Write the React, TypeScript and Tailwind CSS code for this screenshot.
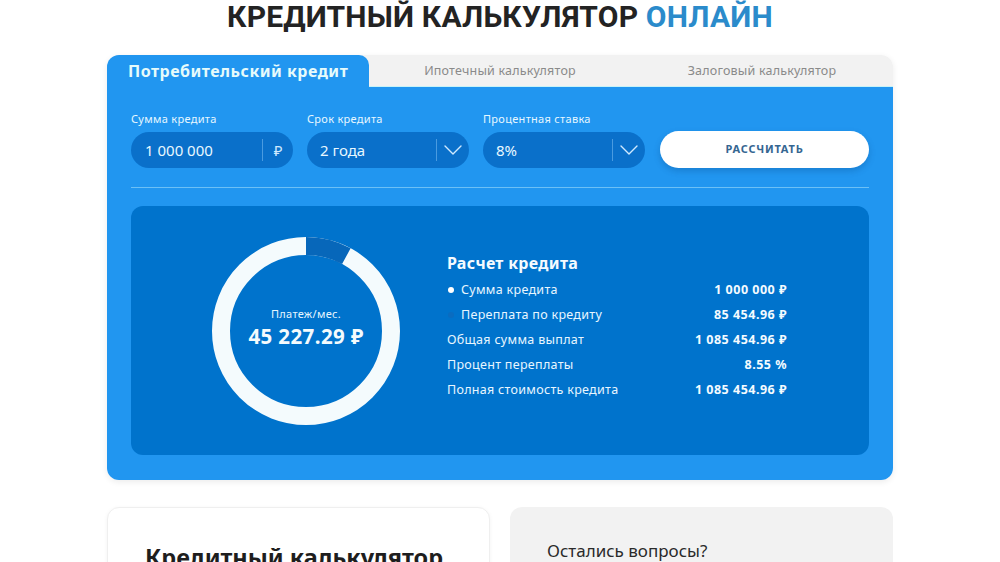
import React from "react";

const body = { fontFamily: '"Noto Sans", "Open Sans", sans-serif' };

function Chevron() {
  return (
    <svg width="18" height="10" viewBox="0 0 18 10" fill="none">
      <path d="M1 1l8 8 8-8" stroke="#cfe9ff" strokeWidth="1.4" strokeLinecap="round" strokeLinejoin="round" />
    </svg>
  );
}

function Donut() {
  const r = 85;
  const c = 2 * Math.PI * r;
  const frac = 0.0787;
  return (
    <div className="relative w-[188px] h-[188px] shrink-0">
      <svg width="188" height="188" viewBox="0 0 188 188" className="-rotate-90">
        <circle cx="94" cy="94" r={r} fill="none" stroke="#f4fbfd" strokeWidth="18" />
        <circle
          cx="94"
          cy="94"
          r={r}
          fill="none"
          stroke="#0767ba"
          strokeWidth="18"
          strokeDasharray={`${c * frac} ${c}`}
        />
      </svg>
      <div className="absolute inset-0 flex flex-col items-center justify-center pb-[2px]">
        <div className="text-[11px] leading-[13px] tracking-[0.3px] text-[#e6f6ff] mt-[-4px]">Платеж/мес.</div>
        <div className="text-[20.5px] leading-[24px] font-bold tracking-[0.4px] text-[#f4fbfd] mt-[4px]">45 227.29 ₽</div>
      </div>
    </div>
  );
}

function Row({ label, value, dot }: { label: string; value: string; dot?: "white" | "blue" }) {
  return (
    <div className="flex items-center justify-between h-[25px]">
      <div className="flex items-center text-[12.5px] tracking-[0.3px] text-[#e8f6ff]">
        {dot && (
          <span
            className={
              dot === "white"
                ? "w-[6px] h-[6px] rounded-full bg-white ml-[1px] mr-[7px]"
                : "w-[6px] h-[6px] rounded-full bg-[#0a6cc0] ml-[1px] mr-[7px]"
            }
          />
        )}
        <span>{label}</span>
      </div>
      <div className="text-[12.5px] font-bold tracking-[0.5px] text-[#f4fbff]">{value}</div>
    </div>
  );
}

export default function App() {
  return (
    <div className="w-full h-[562px] overflow-hidden bg-white" style={body}>
      <h1
        className="text-center text-[30px] leading-[30px] font-bold mt-[2px] tracking-[0.2px]"
        style={{ fontFamily: 'Roboto, "Liberation Sans", sans-serif' }}
      >
        <span className="text-[#232323]">КРЕДИТНЫЙ КАЛЬКУЛЯТОР </span>
        <span className="text-[#2b8bcb]">ОНЛАЙН</span>
      </h1>

      <div className="w-[786px] mx-auto mt-[23px] rounded-[12px] overflow-hidden shadow-[0_2px_6px_rgba(0,0,0,0.08)]">
        <div className="grid grid-cols-3 h-[32px] bg-[#f2f2f2] shadow-[inset_0_-1px_0_#c9f3f7]">
          <div className="bg-[#2196f0] rounded-tr-[10px] flex items-center pl-[21px]">
            <span className="text-[16px] font-bold tracking-[0.5px] text-[#e6fbfb]">Потребительский кредит</span>
          </div>
          <div className="flex items-center justify-center text-[12.5px] tracking-[0.2px] text-[#8a8a8a]">Ипотечный калькулятор</div>
          <div className="flex items-center justify-center text-[12.5px] tracking-[0.2px] text-[#8a8a8a]">Залоговый калькулятор</div>
        </div>

        <div className="bg-[#2196f0] px-[24px] pt-[25px] pb-[25px]">
          <div className="flex items-end gap-[14px]">
            <div className="w-[162px]">
              <div className="text-[11px] leading-[14px] tracking-[0.3px] text-[#e6f6ff] mb-[6px]">Сумма кредита</div>
              <div className="h-[36px] rounded-full bg-[#0a70ca] flex items-center">
                <span className="flex-1 pl-[14px] text-[15px] text-[#e8f8ff]">1 000 000</span>
                <span className="w-px h-[22px] bg-[#4a9be0]" />
                <span className="w-[30px] text-center text-[15px] text-[#cfe9ff]">₽</span>
              </div>
            </div>
            <div className="w-[162px]">
              <div className="text-[11px] leading-[14px] tracking-[0.3px] text-[#e6f6ff] mb-[6px]">Срок кредита</div>
              <div className="h-[36px] rounded-full bg-[#0a70ca] flex items-center">
                <span className="flex-1 pl-[13px] text-[15px] text-[#e8f8ff]">2 года</span>
                <span className="w-px h-[22px] bg-[#4a9be0]" />
                <span className="w-[32px] flex justify-center">
                  <Chevron />
                </span>
              </div>
            </div>
            <div className="w-[162px]">
              <div className="text-[11px] leading-[14px] tracking-[0.3px] text-[#e6f6ff] mb-[6px]">Процентная ставка</div>
              <div className="h-[36px] rounded-full bg-[#0a70ca] flex items-center">
                <span className="flex-1 pl-[13px] text-[15px] text-[#e8f8ff]">8%</span>
                <span className="w-px h-[22px] bg-[#4a9be0]" />
                <span className="w-[32px] flex justify-center">
                  <Chevron />
                </span>
              </div>
            </div>
            <button className="flex-1 h-[37px] ml-[1px] rounded-full bg-white text-[11px] font-bold text-[#356691] tracking-[0.8px] shadow-[0_3px_6px_rgba(0,60,120,0.25)]">
              РАССЧИТАТЬ
            </button>
          </div>

          <div className="h-px bg-[#6cc0f6] mt-[19px] mb-[18px]" />

          <div className="h-[249px] rounded-[12px] bg-[#0073cc] flex items-center pl-[81px]">
            <Donut />
            <div className="ml-[47px] w-[340px] pb-[6px]">
              <div className="text-[16px] font-bold tracking-[0.3px] text-[#f4fbff] leading-[20px] mb-[5px]">Расчет кредита</div>
              <Row label="Сумма кредита" value="1 000 000 ₽" dot="white" />
              <Row label="Переплата по кредиту" value="85 454.96 ₽" dot="blue" />
              <Row label="Общая сумма выплат" value="1 085 454.96 ₽" />
              <Row label="Процент переплаты" value="8.55 %" />
              <Row label="Полная стоимость кредита" value="1 085 454.96 ₽" />
            </div>
          </div>
        </div>
      </div>

      <div className="w-[786px] mx-auto mt-[27px] flex gap-[20px]">
        <div className="w-[383px] h-[120px] rounded-[12px] bg-white border border-[#efefef] shadow-[0_1px_4px_rgba(0,0,0,0.05)] pl-[37px] pt-[34px]">
          <div className="text-[23.5px] font-bold text-[#1e1e1e] leading-[30px]">Кредитный калькулятор</div>
        </div>
        <div className="w-[383px] h-[120px] rounded-[12px] bg-[#f2f2f2] pl-[37px] pt-[34px]">
          <div className="text-[17px] text-[#2a2a2a] leading-[20px]">Остались вопросы?</div>
        </div>
      </div>
    </div>
  );
}
